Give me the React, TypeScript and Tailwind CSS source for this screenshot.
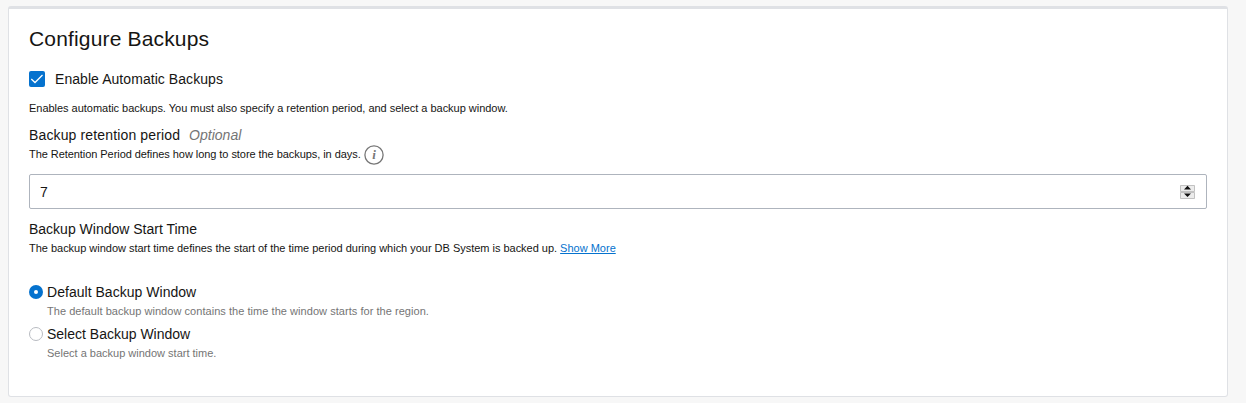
export default function App() {
  return (
    <div className="h-[403px] overflow-hidden bg-[#f7f7f7] pl-2 pt-[6px] font-['Liberation_Sans',Arial,sans-serif] text-[#161513]">
      <main className="h-[391px] w-[1220px] rounded-[3px] border border-t-[3px] border-[#dfe1e5] bg-white px-5">
        <h1 className="mt-[17px] h-[26px] text-[21px] leading-[26px] tracking-[0.16px]">Configure Backups</h1>
        <label className="mt-[17px] flex h-5 items-center">
          <input type="checkbox" defaultChecked className="sr-only" />
          <svg width="16" height="16" viewBox="0 0 16 16">
            <rect width="16" height="16" rx="2" fill="#0572ce" />
            <path d="M2.300 8l3.700 3.500L13.500 4" fill="none" stroke="white" strokeWidth="1.3" />
          </svg>
          <span className="ml-[10px] text-[14px] tracking-[0.06px]">Enable Automatic Backups</span>
        </label>
        <p className="mt-[11px] h-4 whitespace-nowrap text-[11px] leading-4 tracking-[-0.026px]">
          Enables automatic backups. You must also specify a retention period, and select a backup window.
        </p>
        <div className="mt-[9px] h-5 text-[14px] leading-5">
          <span className="tracking-[0.14px]">Backup retention period</span> <i className="ml-[5px] text-[#757575] tracking-[0.03px]">Optional</i>
        </div>
        <div className="flex h-[19px] items-center text-[11px]">
          <span className="h-[18px] leading-4 tracking-[-0.06px]">The Retention Period defines how long to store the backups, in days.</span>
          <svg className="ml-[3px]" width="20" height="20" viewBox="0 0 20 20">
            <circle cx="10" cy="10" r="9.1" fill="none" stroke="#777" strokeWidth="1.3" />
            <text x="10" y="14" textAnchor="middle" fontSize="13" fontStyle="italic" fontWeight="bold" fontFamily="Liberation Serif, serif" fill="#777">i</text>
          </svg>
        </div>
        <div className="mt-[10px] flex h-[35px] items-center justify-between rounded-[2px] border border-[#aeb4bd] pl-[10px] pr-[11px] text-[14px]">
          <span className="pt-px">7</span>
          <svg width="15" height="14" viewBox="0 0 15 14">
            <path d="M0 0h15v14H0z" fill="#ececec" />
            <path d="M.5.5h14v6H.5zM.5 7.500h14v6H.5z" fill="none" stroke="#c2c2c2" />
            <path d="M4 4.500l3.500-3.800L11 4.500zM4 8.500h7l-3.500 3.600z" fill="#111" />
          </svg>
        </div>
        <h2 className="mt-[10px] h-5 text-[14px] leading-5">Backup Window Start Time</h2>
        <p className="mt-[1px] h-4 whitespace-nowrap text-[11px] leading-4">
          <span className="tracking-[-0.019px]">The backup window start time defines the start of the time period during which your DB System is backed up.{' '}</span>
          <a className="text-[#0572ce] underline" href="#">Show More</a>
        </p>
        <label className="mt-[26px] flex h-5 items-center text-[14px]">
          <svg width="14" height="14" viewBox="0 0 14 14">
            <circle cx="7" cy="7" r="7" fill="#0572ce" />
            <circle cx="7" cy="7" r="2" fill="white" />
          </svg>
          <span className="ml-1 tracking-[0.03px]">Default Backup Window</span>
        </label>
        <p className="ml-[18px] mt-[1px] h-4 text-[11px] leading-4 tracking-[0.045px] text-[#757575]">
          The default backup window contains the time the window starts for the region.
        </p>
        <label className="mt-[5px] flex h-5 items-center text-[14px]">
          <svg width="14" height="14" viewBox="0 0 14 14">
            <circle cx="7" cy="7" r="6.5" fill="white" stroke="#b8bbc1" />
          </svg>
          <span className="ml-1">Select Backup Window</span>
        </label>
        <p className="ml-[18px] mt-[1px] h-4 text-[11px] leading-4 text-[#757575]">Select a backup window start time.</p>
      </main>
    </div>
  );
}
